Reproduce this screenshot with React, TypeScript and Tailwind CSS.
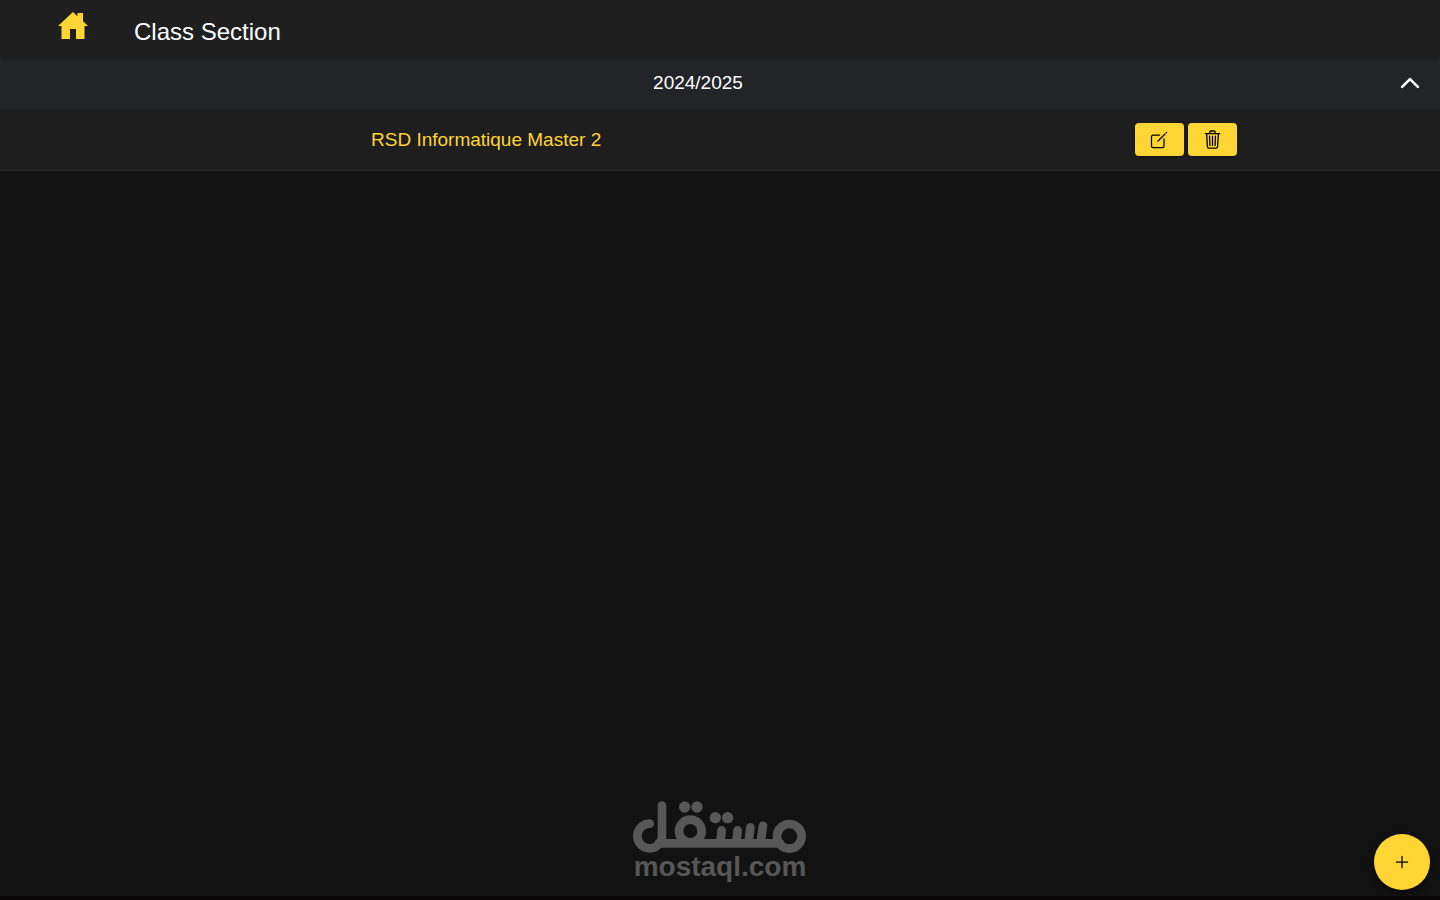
import { useState } from 'react';
import {
	IoAddOutline,
	IoChevronUp,
	IoCreateOutline,
	IoTrashOutline,
} from 'react-icons/io5';

interface ClassSection {
	id: number;
	name: string;
}

const sections: ClassSection[] = [{ id: 1, name: 'RSD Informatique Master 2' }];

function HomeIcon() {
	return (
		<svg viewBox="0 0 30 27" className="w-[30px] h-[27px]" fill="currentColor">
			<path d="M15 0 19.5 4.2V1H25V9.2L30 14H26.5V27H18V17H12V27H3.5V14H0Z" />
		</svg>
	);
}

function Header() {
	return (
		<header className="relative flex h-14 items-center bg-[#1f1f1f] pl-[58px] shadow-[0_2px_4px_rgba(0,0,0,0.3)]">
			<a href="#home" aria-label="Home" className="pb-1.5 text-[#ffd534]">
				<HomeIcon />
			</a>
			<h1 className="ml-[46px] pt-2 text-[24px] leading-8 text-white">
				Class Section
			</h1>
		</header>
	);
}

function SectionRow({ section }: { section: ClassSection }) {
	const buttonClass =
		'flex h-[33px] w-[49px] items-center justify-center rounded bg-[#ffd534] pr-px text-black shadow-[0_1px_3px_rgba(0,0,0,0.4)]';

	return (
		<li className="flex h-[62px] items-center border-b border-[#272727] bg-[#1e1e1e]">
			<span className="flex-1 pl-[371px] text-[19px] leading-6 text-[#ffd534]">
				{section.name}
			</span>
			<div className="mr-[203px] flex gap-1">
				<button type="button" aria-label="Edit" className={buttonClass}>
					<IoCreateOutline size={20} />
				</button>
				<button type="button" aria-label="Delete" className={buttonClass}>
					<IoTrashOutline size={21} />
				</button>
			</div>
		</li>
	);
}

function Watermark() {
	return (
		<div className="flex flex-col items-center text-[#575757]">
			<svg
				viewBox="39 34 522 156"
				className="h-[52px] w-[174px]"
				fill="none"
				stroke="currentColor"
				strokeWidth="26"
				strokeLinecap="round"
				strokeLinejoin="round"
				aria-hidden="true"
			>
				<path d="M89 102A37 37 0 1 0 126 139V48" />
				<path d="M116 161H480" />
				<circle cx="211" cy="124" r="34" />
				<circle cx="508" cy="140" r="37" />
				<path d="M305 122 301 158M353 122 349 158M391 113 386 158M429 108 422 158" />
				<g fill="currentColor" stroke="none">
					<circle cx="194" cy="52" r="17" />
					<circle cx="231" cy="52" r="17" />
					<circle cx="286" cy="84" r="17" />
					<circle cx="323" cy="84" r="17" />
				</g>
			</svg>
			<span className="text-[28px] font-bold leading-7">mostaql.com</span>
		</div>
	);
}

export default function App() {
	const [open, setOpen] = useState(true);

	return (
		<div className="flex min-h-screen flex-col border-b-4 border-[#0a0608] bg-[#121212] font-['Liberation_Sans',Arial,sans-serif]">
			<Header />
			<main className="flex flex-1 flex-col">
				<button
					type="button"
					aria-expanded={open}
					onClick={() => setOpen(!open)}
					className="flex h-[53px] items-center bg-[#222428] pr-4 text-white"
				>
					<span className="flex-1 text-center text-[19px] leading-6">
						2024/2025
					</span>
					<IoChevronUp size={28} className={open ? '' : 'rotate-180'} />
				</button>
				{open && (
					<ul>
						{sections.map((section) => (
							<SectionRow key={section.id} section={section} />
						))}
					</ul>
				)}
				<div className="mt-auto flex justify-center pb-[15px]">
					<Watermark />
				</div>
			</main>
			<button
				type="button"
				aria-label="Add class section"
				className="fixed bottom-[10px] right-[10px] flex size-14 items-center justify-center rounded-full bg-[#ffd534] text-black shadow-[0_3px_6px_rgba(0,0,0,0.5)]"
			>
				<IoAddOutline size={20} />
			</button>
		</div>
	);
}
